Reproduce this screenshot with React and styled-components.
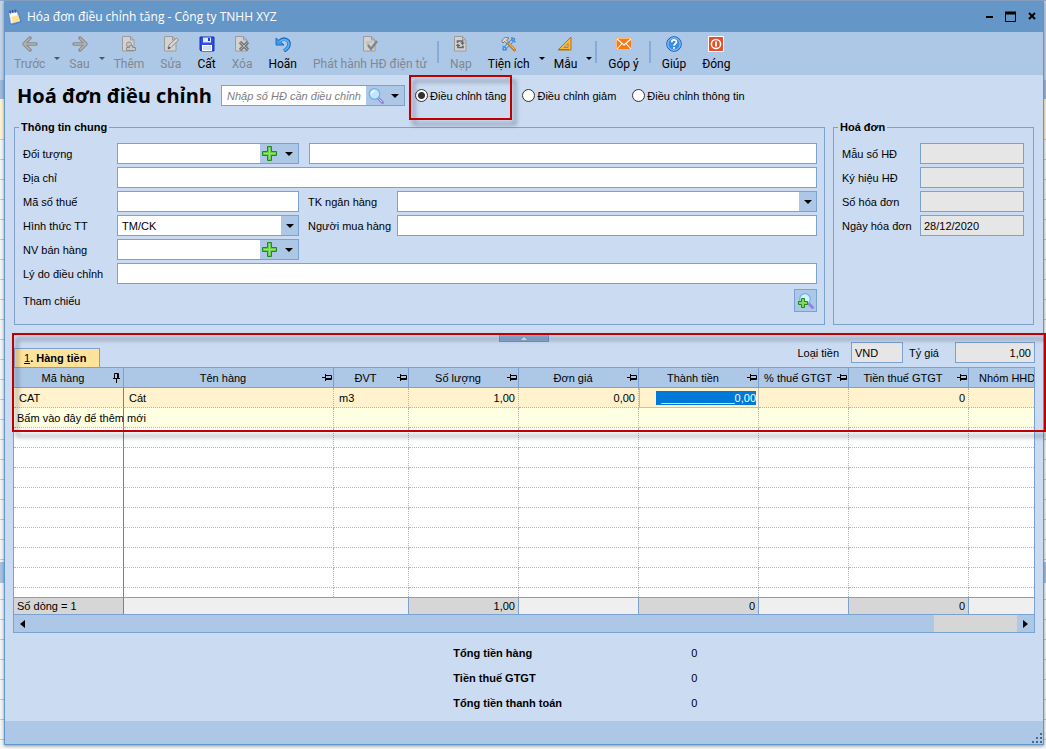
import React, { useState } from 'react'
import styled, { createGlobalStyle, css } from 'styled-components';

const columns = [
    { name: 'Mã hàng', width: 110, pin: 'down' },
    { name: 'Tên hàng', width: 210, pin: 'side' },
    { name: 'ĐVT', width: 75, pin: 'side' },
    { name: 'Số lượng', width: 110, pin: 'side', sum: '1,00' },
    { name: 'Đơn giá', width: 120, pin: 'side' },
    { name: 'Thành tiền', width: 120, pin: 'side', sum: '0' },
    { name: '% thuế GTGT', width: 90, pin: 'side' },
    { name: 'Tiền thuế GTGT', width: 120, pin: 'side', sum: '0' },
    { name: 'Nhóm HHD' },
];

const totals = [
    { label: 'Tổng tiền hàng', value: '0' },
    { label: 'Tiền thuế GTGT', value: '0' },
    { label: 'Tổng tiền thanh toán', value: '0' },
];

const adjustTypes = ['Điều chỉnh tăng', 'Điều chỉnh giảm', 'Điều chỉnh thông tin'];

/* ---------- icons ---------- */

const Svg = ({ size = 16, children }) => (
    <svg width={size} height={size} viewBox={`0 0 ${size} ${size}`} aria-hidden="true">{children}</svg>
)

const Page = () => (
    <path d="M1.5.5h8l3.500 3.500v11h-11.500z M9.500.5v3.500h3.500" fill="#d2d2d2" stroke="#9c9c9c" />
)

const icons = {
    back: <Svg><path d="M8 2L2 8l6 6M3 8h11" fill="none" stroke="#8b8b8b" strokeWidth="3.4" strokeLinejoin="round" strokeLinecap="round" /><path d="M8 2L2 8l6 6M3 8h11" fill="none" stroke="#b4b4b4" strokeWidth="1.4" /></Svg>,
    next: <Svg><path d="M8 2l6 6-6 6M13 8H2" fill="none" stroke="#8b8b8b" strokeWidth="3.4" strokeLinejoin="round" strokeLinecap="round" /><path d="M8 2l6 6-6 6M13 8H2" fill="none" stroke="#b4b4b4" strokeWidth="1.4" /></Svg>,
    add: <Svg><Page /><circle cx="8" cy="8.500" r="2.500" fill="#c8c8c8" stroke="#8e8e8e" /><path d="M5.500 11.500h3v-2h3v2h3v3h-9z" fill="#c8c8c8" stroke="#8e8e8e" strokeLinejoin="round" /></Svg>,
    edit: <Svg><Page /><path d="M5 12.500l1-3.500 7.500-7 2 2-7.500 7.500z" fill="#d8d8d8" stroke="#8a8a8a" /><path d="M5 12.500l2-1" stroke="#555" strokeWidth="1.500" /></Svg>,
    save: <Svg><path d="M1 1h14v14H2l-1-1z" fill="#2f4fe0" stroke="#1230b8" /><path d="M4 1.5h8v5H4z" fill="#dfe9ff" /><path d="M9 2h2v3H9z" fill="#1d38c4" /><path d="M3 9h10v6H3z" fill="#fff" /><path d="M4 11h8M4 13h8" stroke="#a9b9ee" /></Svg>,
    remove: <Svg><Page /><path d="M6 6l8 8M14 6l-8 8" stroke="#777" strokeWidth="3.200" /><path d="M6.500 6.500l7 7M13.500 6.500l-7 7" stroke="#b5b5b5" /></Svg>,
    undo: <Svg><path d="M5 5C8 1.500 14.500 3 14 8.500c-.2 3-2.500 5-5 6.500" fill="none" stroke="#1d6cc4" strokeWidth="3.600" /><path d="M1 2v7h8z" fill="#3b9be8" stroke="#1d6cc4" strokeLinejoin="round" /><path d="M4.500 5.800C8 2 14 3.500 13.800 8.500c-.2 2.500-2 4.500-4.500 6" fill="none" stroke="#55b2f5" strokeWidth="1.800" /></Svg>,
    publish: <Svg><Page /><path d="M4 6h6M4 8h3" stroke="#b0b0b0" /><path d="M6 9l3 4 6-8" fill="none" stroke="#858585" strokeWidth="2.400" /></Svg>,
    reload: <Svg><Page /><path d="M4.500 7V5h5v2M10 9.500V11.500H5V10" fill="none" stroke="#666" strokeWidth="1.600" /><path d="M7 6.500h5l-2.500 2.500zM2.500 10h5L5 7.500z" fill="#666" /></Svg>,
    tools: <Svg><path d="M3 13L12.500 3.500" stroke="#3f86cf" strokeWidth="3.200" strokeLinecap="round" /><path d="M3 13L12.500 3.500" stroke="#a9dbff" strokeWidth="1.600" /><path d="M11 1v3.500L14.500 6M1.500 10.500l3 1 1 3" fill="none" stroke="#4b91d8" strokeWidth="1.600" /><path d="M6.500 6.500l7 7.500" stroke="#c77a1a" strokeWidth="3" strokeLinecap="round" /><path d="M7.500 7l6 6.500" stroke="#ffc766" /><path d="M1 5.500C1.500 2 5 .5 8 2L5.500 4l2 2L6 7.500 3.500 5.500 2 7z" fill="#d8d8d8" stroke="#666" strokeWidth=".8" /></Svg>,
    template: <Svg><path d="M1 14L14 1v13z" fill="#f5b93c" stroke="#b87410" /><path d="M7 11.500l4-4v4z" fill="#adc7e6" stroke="#b87410" strokeWidth=".8" /><path d="M3 14v-1M5 14v-1M7 14v-1M9 14v-1M11 14v-1" stroke="#7a4a00" /></Svg>,
    mail: <Svg><path d="M.5 2.500h15v11H.5z" fill="#f47b16" stroke="#ffb66e" /><path d="M1 3l7 6 7-6M1 13l5-5.500M15 13l-5-5.500" fill="none" stroke="#fff" strokeWidth="1.100" /></Svg>,
    help: <Svg><circle cx="8" cy="8" r="7.300" fill="#3b8ce6" stroke="#1f5fb4" /><circle cx="8" cy="8" r="6.200" fill="none" stroke="#b4dcff" strokeWidth=".8" /><path d="M5.800 6.200c0-3 4.600-3 4.600-.2C10.400 7.700 8 7.800 8 9.800M8 11v1.800" fill="none" stroke="#fff" strokeWidth="1.700" /></Svg>,
    close: <Svg><path d="M.5.5h15v15H.5z" fill="#e2512c" stroke="#fff" /><circle cx="8" cy="8" r="4.600" fill="none" stroke="#fff" strokeWidth="1.500" /><path d="M8 5.500v5" stroke="#fff" strokeWidth="1.800" /></Svg>,
};

const Plus = () => (
    <Svg><path d="M5.500.5h4v5h5v4h-5v5h-4v-5h-5v-4h5z" fill="#6cc94a" stroke="#1e8a1e" /><path d="M7.500 2v11M2 7.500h11" stroke="#9be07a" /></Svg>
)

const Caret = () => (
    <svg width="8" height="4" viewBox="0 0 8 4" aria-hidden="true"><path d="M0 0h8L4 4z" fill="currentColor" /></svg>
)

const Magnifier = () => (
    <Svg><path d="M10 10l4.500 4.500" stroke="#8f86d8" strokeWidth="3" strokeLinecap="round" /><path d="M10.500 10.500l3.500 3.500" stroke="#cfc9fa" /><circle cx="6.500" cy="6" r="5.300" fill="#bfe6fb" stroke="#6fb1e8" strokeWidth="1.200" /><path d="M3.500 6c0-2 1-3 3-3" fill="none" stroke="#fff" strokeWidth="1.300" /></Svg>
)

const AddReference = () => (
    <Svg><path d="M11 11l3.500 3.500" stroke="#8f86d8" strokeWidth="3" strokeLinecap="round" /><circle cx="7" cy="6" r="5.300" fill="#d5effc" stroke="#6fb1e8" strokeWidth="1.200" /><path d="M3.500 5.500h3v3h3v3h-3v3h-3v-3h-3v-3h3z" fill="#7ed957" stroke="#1e8a1e" /></Svg>
)

const Pin = ({ kind }) => (
    <svg width="10" height="10" viewBox="0 0 10 10" aria-hidden="true">
        {kind === 'down'
            ? <path d="M2.500 .5h4v5M2.500 .5v5M5.500 .5v5M1 5.500h7M4.500 6v4" fill="none" stroke="#000" />
            : <path d="M9.500 2.500v4M3.500 2.500h6M3.500 5.500h6M3.500 6.500h6M3.500 1v7M0 4.500h3" fill="none" stroke="#000" />}
    </svg>
)

const NoteIcon = () => (
    <Svg>
        <path d="M1 3l9-2 1 1 4 11-9 3-3-1z" fill="#4d7fd0" />
        <path d="M2 4l8-1 3 9-9 2.500z" fill="#fbfbff" stroke="#9db9e4" strokeWidth=".6" />
        <path d="M4 8l7-2 2 6-7 2z" fill="#ffe28a" />
        <path d="M3 1.500l.5 3M5.500 1l.5 3M8 .5l.5 3" stroke="#27509c" />
    </Svg>
)

const toolbar = [
    { text: 'Trước', icon: 'back', disabled: true, menu: true },
    { text: 'Sau', icon: 'next', disabled: true, menu: true },
    { text: 'Thêm', icon: 'add', disabled: true },
    { text: 'Sửa', icon: 'edit', disabled: true },
    { text: 'Cất', icon: 'save' },
    { text: 'Xóa', icon: 'remove', disabled: true },
    { text: 'Hoãn', icon: 'undo' },
    { text: 'Phát hành HĐ điện tử', icon: 'publish', disabled: true, line: true },
    { text: 'Nạp', icon: 'reload', disabled: true },
    { text: 'Tiện ích', icon: 'tools', menu: true },
    { text: 'Mẫu', icon: 'template', menu: true, line: true },
    { text: 'Góp ý', icon: 'mail', line: true },
    { text: 'Giúp', icon: 'help' },
    { text: 'Đóng', icon: 'close' },
];

const App = () => {
    const [type, setType] = useState(adjustTypes[0]);

    return (
        <Backdrop>
            <GlobalStyle />
            <Window>
                <TitleBar>
                    <NoteIcon />
                    <WindowTitle>Hóa đơn điều chỉnh tăng - Công ty TNHH XYZ</WindowTitle>
                    <WindowButton aria-label="Thu nhỏ"><svg width="12" height="12"><path d="M2 6h7" stroke="#000" strokeWidth="2" /></svg></WindowButton>
                    <WindowButton aria-label="Phóng to"><svg width="12" height="12"><path d="M.5 1.500h10v9H.5z" fill="none" stroke="#000" /><path d="M0 2h11" stroke="#000" strokeWidth="3" /></svg></WindowButton>
                    <WindowButton aria-label="Đóng cửa sổ"><svg width="12" height="12"><path d="M3 2l6 6M9 2l-6 6" stroke="#000" strokeWidth="2" /></svg></WindowButton>
                </TitleBar>

                <Toolbar>
                    {toolbar.map(item => (
                        <React.Fragment key={item.text}>
                            <ToolButton disabled={item.disabled}>
                                {icons[item.icon]}
                                <span>{item.text}</span>
                            </ToolButton>
                            {item.menu && <ToolMenu disabled={item.disabled} aria-label={`Mở ${item.text}`}><Caret /></ToolMenu>}
                            {item.line && <Separator />}
                        </React.Fragment>
                    ))}
                </Toolbar>

                <Header>
                    <Heading>Hoá đơn điều chỉnh</Heading>
                    <SearchBox>
                        <SearchInput aria-label="Số HĐ cần điều chỉnh" placeholder="Nhập số HĐ cần điều chỉnh" />
                        <BoxButton aria-label="Tìm"><Magnifier /></BoxButton>
                        <BoxButton aria-label="Danh sách"><Caret /></BoxButton>
                    </SearchBox>
                    <Radios>
                        {adjustTypes.map((name, index) => (
                            <Radio key={name}>
                                <input type="radio" name="type" checked={type === name} onChange={() => setType(name)} />
                                {name}
                                {index === 0 && <RadioMark />}
                            </Radio>
                        ))}
                    </Radios>
                </Header>

                <Groups>
                    <Group $grow>
                        <legend>Thông tin chung</legend>
                        <Row>
                            <Label htmlFor="customer">Đối tượng</Label>
                            <Box $fixed>
                                <BoxInput id="customer" />
                                <BoxButton aria-label="Thêm đối tượng"><Plus /></BoxButton>
                                <BoxButton aria-label="Chọn đối tượng"><Caret /></BoxButton>
                            </Box>
                            <Box $apart><BoxInput aria-label="Tên đối tượng" /></Box>
                        </Row>
                        <Row>
                            <Label htmlFor="address">Địa chỉ</Label>
                            <Box><BoxInput id="address" /></Box>
                        </Row>
                        <Row>
                            <Label htmlFor="tax">Mã số thuế</Label>
                            <Box $fixed><BoxInput id="tax" /></Box>
                            <Label $side htmlFor="bank">TK ngân hàng</Label>
                            <Box>
                                <BoxInput id="bank" />
                                <BoxButton $narrow aria-label="Chọn tài khoản"><Caret /></BoxButton>
                            </Box>
                        </Row>
                        <Row>
                            <Label htmlFor="payment">Hình thức TT</Label>
                            <Box $fixed>
                                <BoxSelect id="payment" defaultValue="TM/CK">
                                    <option>TM/CK</option>
                                </BoxSelect>
                                <SelectArrow><Caret /></SelectArrow>
                            </Box>
                            <Label $side htmlFor="buyer">Người mua hàng</Label>
                            <Box><BoxInput id="buyer" /></Box>
                        </Row>
                        <Row>
                            <Label htmlFor="seller">NV bán hàng</Label>
                            <Box $fixed>
                                <BoxInput id="seller" />
                                <BoxButton aria-label="Thêm nhân viên"><Plus /></BoxButton>
                                <BoxButton aria-label="Chọn nhân viên"><Caret /></BoxButton>
                            </Box>
                        </Row>
                        <Row>
                            <Label htmlFor="reason">Lý do điều chỉnh</Label>
                            <Box><BoxInput id="reason" /></Box>
                        </Row>
                        <ReferenceRow>
                            <span>Tham chiếu</span>
                            <ReferenceButton aria-label="Chọn chứng từ tham chiếu"><AddReference /></ReferenceButton>
                        </ReferenceRow>
                    </Group>

                    <Group>
                        <legend>Hoá đơn</legend>
                        {[['form', 'Mẫu số HĐ', ''], ['symbol', 'Ký hiệu HĐ', ''], ['number', 'Số hóa đơn', ''], ['date', 'Ngày hóa đơn', '28/12/2020']].map(([id, name, value]) => (
                            <Row key={id}>
                                <Label $short htmlFor={id}>{name}</Label>
                                <Box $locked><BoxInput id={id} readOnly value={value} /></Box>
                            </Row>
                        ))}
                    </Group>
                </Groups>

                <Detail>
                    <Collapse aria-label="Thu gọn"><svg width="6" height="3"><path d="M0 3h6L3 0z" fill="#f2f2f2" /></svg></Collapse>
                    <TabRow>
                        <Tab><span><u>1</u>. Hàng tiền</span></Tab>
                        <Currency>
                            <label htmlFor="currency">Loại tiền</label>
                            <CurrencyBox $locked><BoxInput id="currency" readOnly value="VND" /></CurrencyBox>
                            <label htmlFor="rate">Tỷ giá</label>
                            <RateBox $locked><BoxInput $right id="rate" readOnly value="1,00" /></RateBox>
                        </Currency>
                    </TabRow>
                    <Grid>
                        <colgroup>
                            {columns.map(col => <col key={col.name} width={col.width} />)}
                        </colgroup>
                        <thead>
                            <tr>
                                {columns.map(col => (
                                    <th key={col.name}>
                                        <HeadCell $cut={!col.pin}>
                                            <span>{col.name}</span>
                                            {col.pin && <Pin kind={col.pin} />}
                                        </HeadCell>
                                    </th>
                                ))}
                            </tr>
                        </thead>
                        <tbody>
                            <GridRow $color="#fff2cc">
                                <td>CAT</td>
                                <td>Cát</td>
                                <td>m3</td>
                                <Num>1,00</Num>
                                <Num>0,00</Num>
                                <ActiveCell><CellInput aria-label="Thành tiền" defaultValue="____________0,00" /></ActiveCell>
                                <td />
                                <Num>0</Num>
                                <td />
                            </GridRow>
                            <GridRow $color="#ffffe1">
                                <HintCell>Bấm vào đây để thêm mới</HintCell>
                                {columns.slice(1).map(col => <td key={col.name} />)}
                            </GridRow>
                            {[...Array(8)].map((_, index) => (
                                <GridRow key={index}>
                                    {columns.map(col => <td key={col.name} />)}
                                </GridRow>
                            ))}
                            <GridRow $last>
                                {columns.map(col => <td key={col.name} />)}
                            </GridRow>
                        </tbody>
                        <tfoot>
                            <tr>
                                {columns.map((col, index) => (
                                    <SumCell key={col.name} $filled={index === 0 || col.sum} $open={index === 1}>
                                        {index === 0 ? 'Số dòng = 1' : col.sum}
                                    </SumCell>
                                ))}
                            </tr>
                        </tfoot>
                    </Grid>
                    <ScrollBar>
                        <ScrollButton aria-label="Cuộn trái"><svg width="5" height="8"><path d="M5 0v8L0 4z" /></svg></ScrollButton>
                        <Thumb />
                        <ScrollButton aria-label="Cuộn phải"><svg width="5" height="8"><path d="M0 0v8l5-4z" /></svg></ScrollButton>
                    </ScrollBar>
                    <DetailMark />
                </Detail>

                <Totals>
                    {totals.map(({ label, value }) => (
                        <div key={label}>
                            <dt>{label}</dt>
                            <dd>{value}</dd>
                        </div>
                    ))}
                </Totals>

                <StatusBar>
                    <svg width="11" height="11" aria-hidden="true">
                        <path d="M8 0h2v2H8zM8 4h2v2H8zM4 4h2v2H4zM8 8h2v2H8zM4 8h2v2H4zM0 8h2v2H0z" fill="#47658f" />
                    </svg>
                </StatusBar>
            </Window>
        </Backdrop>
    )
}

export default App

const GlobalStyle = createGlobalStyle`

:root{
    --line: #7ba1d1;
    --body: #cbdbf1;
    --bar: #adc7e6;
    --title: #6496c8;
}
*{
    box-sizing: border-box;
}
body{
    margin: 0;
    font: 11px/14px "Liberation Sans", Arial, sans-serif;
    color: #000;
}
button, input, select{
    font: inherit;
    color: inherit;
    margin: 0;
    padding: 0;
    border: 0;
    border-radius: 0;
    background: transparent;
}
svg{
    display: block;
    flex: none;
}
`;

const Backdrop = styled.div`
display: flex;
min-height: 100vh;
padding: 1px 2px 4px 4px;
overflow: hidden;
background:
    linear-gradient(#8fa9cb 1px, transparent 1px),
    linear-gradient(transparent 562px, #a8c2e2 562px, #a8c2e2 583px, transparent 583px),
    linear-gradient(#c3d3e8 80px, #9db9dc 80px, #9db9dc 99px, #fff2cc 99px, #fff2cc 139px, transparent 139px),
    repeating-linear-gradient(#f4f5f7 0 19px, #c6c8cc 19px 20px);
`;

const Window = styled.main`
flex: 1;
min-width: 0;
display: flex;
flex-direction: column;
border: 1px solid var(--title);
background: var(--body);
box-shadow: 0 1px 3px rgba(0, 0, 0, 0.4);
`;

const TitleBar = styled.header`
display: flex;
align-items: center;
height: 30px;
padding: 0 1px 0 2px;
background: var(--title);
`;

const WindowTitle = styled.span`
flex: 1;
padding-left: 4px;
color: #fff;
font: 12px/18px "Open Sans", sans-serif;
`;

const WindowButton = styled.button`
display: grid;
place-items: center;
width: 21px;
height: 20px;
`;

const Toolbar = styled.nav`
display: flex;
height: 43px;
padding-left: 1px;
background: var(--bar);
font: 12px/18px Roboto, sans-serif;
`;

const ToolButton = styled.button`
display: flex;
flex-direction: column;
align-items: center;
gap: 3px;
padding: 4px 8px 0;
white-space: nowrap;

&:disabled{
    color: #7f8894;
}
`;

const ToolMenu = styled.button`
width: 8px;
padding-top: 10px;
color: #000;

&:disabled{
    color: #555;
}
svg{
    width: 6px;
    height: 3px;
    margin: 0 auto;
}
`;

const Separator = styled.span`
width: 2px;
height: 22px;
margin: 9px 3px 0 2px;
background: #86abda;
`;

const Header = styled.section`
display: flex;
align-items: center;
padding: 10px 12px 14px;
`;

const Heading = styled.h1`
flex: 0 0 204px;
margin: 0;
font: bold 20px/21px "Open Sans", sans-serif;
white-space: nowrap;
`;

const boxShape = css`
display: flex;
height: 21px;
border: 1px solid var(--line);
background: ${props => props.$locked ? '#e6e6e6' : '#fff'};
`;

const Box = styled.div`
${boxShape}
flex: ${props => props.$fixed ? '0 0 182px' : '1'};
min-width: 0;
margin-left: ${props => props.$apart ? '10px' : '0'};
`;

const SearchBox = styled.div`
${boxShape}
flex: 0 0 184px;
`;

const CurrencyBox = styled.div`
${boxShape}
width: 52px;
`;

const RateBox = styled.div`
${boxShape}
width: 80px;
`;

const BoxInput = styled.input`
flex: 1;
width: 100%;
min-width: 0;
padding: 0 3px;
outline: none;
text-align: ${props => props.$right ? 'right' : 'left'};
`;

const SearchInput = styled(BoxInput)`
padding-left: 5px;

&::placeholder{
    color: #7d7d7d;
    font-style: italic;
    opacity: 1;
}
`;

const BoxSelect = styled.select`
flex: 1;
padding: 0 4px;
appearance: none;
outline: none;
`;

const BoxButton = styled.button`
display: grid;
place-items: center;
flex: 0 0 ${props => props.$narrow ? '17px' : '19px'};
background: var(--bar);
`;

const SelectArrow = styled.span`
display: grid;
place-items: center;
flex: 0 0 17px;
background: var(--bar);
pointer-events: none;
`;

const Radios = styled.div`
display: flex;
gap: 16px;
padding-left: 10px;
`;

const Radio = styled.label`
position: relative;
display: flex;
align-items: center;
gap: 2px;
white-space: nowrap;

input{
    appearance: none;
    width: 13px;
    height: 13px;
    border: 1px solid #333;
    border-radius: 50%;
    background: #fff;
}
input:checked{
    background: radial-gradient(circle, #333 0 3px, #fff 4px);
}
`;

// red frame whose shadow falls on both sides of the line
const mark = css`
position: absolute;
border: 2px solid #c00000;
filter: drop-shadow(4px 5px 2px rgba(40, 50, 70, 0.5));
pointer-events: none;
`;

const RadioMark = styled.span`
${mark}
inset: -14px -6px -17px -6px;
`;

const Groups = styled.section`
display: flex;
gap: 8px;
padding: 0 9px;
`;

const Group = styled.fieldset`
display: flex;
flex-direction: column;
flex: ${props => props.$grow ? '1' : '0 0 201px'};
min-width: 0;
margin: 0;
padding: 9px ${props => props.$grow ? '7px' : '9px'} 12px 8px;
border: 1px solid var(--line);

> * + *{
    margin-top: 3px;
}
legend + *{
    margin-top: 0;
}
legend{
    margin-left: -4px;
    padding: 0 2px;
    font-weight: bold;
}
`;

const Row = styled.div`
display: flex;
align-items: center;
`;

const Label = styled.label`
flex: 0 0 ${props => props.$side ? '89px' : props.$short ? '78px' : '94px'};
margin-left: ${props => props.$side ? '9px' : '0'};
white-space: nowrap;
`;

const ReferenceRow = styled.div`
display: flex;
align-items: center;
justify-content: space-between;
padding-top: 2px;
`;

const ReferenceButton = styled.button`
display: grid;
place-items: center;
width: 23px;
height: 23px;
border: 1px solid var(--line);
background: var(--bar);
`;

const Detail = styled.section`
position: relative;
margin: 8px 8px 0;
padding-top: 2px;
`;

const Collapse = styled.button`
display: grid;
place-items: center;
width: 50px;
height: 7px;
margin: 0 auto;
border: 1px solid #6f96c8;
border-top: 0;
background: #8dacd4;
`;

const TabRow = styled.div`
display: flex;
align-items: flex-start;
justify-content: space-between;
height: 25px;
`;

const Tab = styled.button`
align-self: flex-end;
height: 19px;
padding: 0 13px 0 9px;
margin-left: 1px;
border: 1px solid var(--line);
border-bottom: 0;
background: #ffe39b;
font-weight: bold;

u{
    font-weight: normal;
}
`;

const Currency = styled.div`
display: flex;
align-items: center;
white-space: nowrap;

label{
    padding: 0 12px 0 6px;
}
label:nth-of-type(2){
    padding-right: 16px;
}
`;

const Grid = styled.table`
width: 100%;
table-layout: fixed;
border-collapse: separate;
border-spacing: 0;
border: 1px solid var(--line);
border-bottom: 0;
background: #fff;

th{
    height: 20px;
    padding: 0;
    border-right: 1px solid var(--line);
    border-bottom: 1px solid var(--line);
    background: var(--bar);
    font-weight: normal;
    white-space: nowrap;
}
td{
    padding: 0 5px;
    white-space: nowrap;
}
th:last-child, tr > td:last-child{
    border-right: 0;
}
`;

const HeadCell = styled.div`
display: flex;
align-items: center;
padding: 0 1px 0 ${props => props.$cut ? '10px' : '0'};
overflow: hidden;

span{
    flex: 1;
    text-align: ${props => props.$cut ? 'left' : 'center'};
}
`;

const GridRow = styled.tr`
height: ${props => props.$last ? '9px' : '20px'};
background: ${props => props.$color || '#fff'};

td{
    border-right: 1px dotted #b4b4b4;
    border-bottom: ${props => props.$last ? '0' : '1px dotted #b4b4b4'};
}
td:first-child{
    border-right: 1px solid #808080;
}
`;

const Num = styled.td`
text-align: right;

&&{
    padding: 0 3px;
}
`;

const HintCell = styled.td`
&&{
    padding: 0 3px;
}
`;

const ActiveCell = styled.td`
text-align: right;

&&{
    padding: 0 2px;
    border: 1px solid #bfbfbf;
    border-top: 0;
}
`;

const CellInput = styled.input`
display: block;
width: 100px;
height: 14px;
margin-left: auto;
background: #0078d7;
color: #fff;
text-align: right;
outline: none;
`;

const SumCell = styled.td`
height: 17px;
border-top: 1px solid var(--line);
border-right: ${props => props.$open ? '0' : '1px solid var(--line)'};
background: ${props => props.$filled ? '#d6d6d6' : '#efefef'};
text-align: right;

&&{
    padding: 0 3px;
}
&:first-child{
    border-right-color: #808080;
    text-align: left;
}
`;

const ScrollBar = styled.div`
display: flex;
height: 19px;
border: 1px solid var(--line);
background: var(--bar);
`;

const ScrollButton = styled.button`
display: grid;
place-items: center;
width: 17px;
`;

const Thumb = styled.div`
width: 83px;
margin-left: auto;
background: #d6d6d6;
`;

const DetailMark = styled.div`
${mark}
inset: 0 -11px auto -1px;
height: 99px;
`;

const Totals = styled.dl`
margin: 0 2px;
padding: 7px 0 5px 43%;

div{
    display: flex;
    align-items: center;
    height: 25px;
}
dt{
    width: 238px;
    font-weight: bold;
}
dd{
    margin: 0;
}
`;

const StatusBar = styled.footer`
display: flex;
justify-content: flex-end;
align-items: flex-end;
height: 23px;
margin-top: auto;
background: var(--bar);
`;
